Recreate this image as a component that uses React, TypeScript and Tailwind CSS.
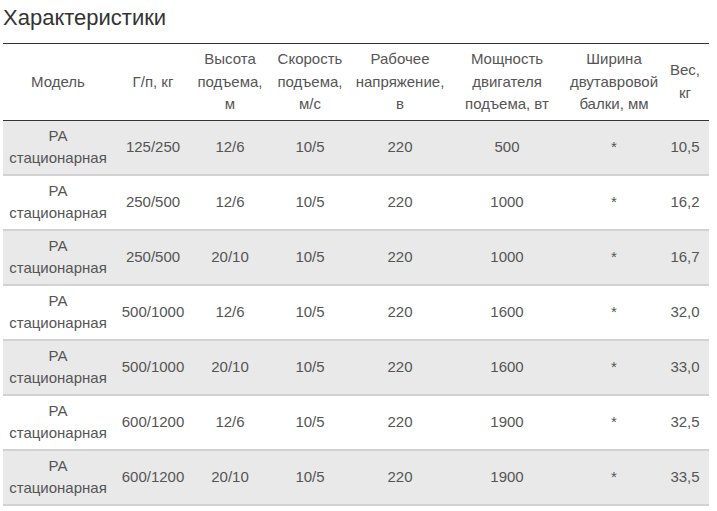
import React from "react";

const rows = [
  ["125/250", "12/6", "10/5", "220", "500", "*", "10,5"],
  ["250/500", "12/6", "10/5", "220", "1000", "*", "16,2"],
  ["250/500", "20/10", "10/5", "220", "1000", "*", "16,7"],
  ["500/1000", "12/6", "10/5", "220", "1600", "*", "32,0"],
  ["500/1000", "20/10", "10/5", "220", "1600", "*", "33,0"],
  ["600/1200", "12/6", "10/5", "220", "1900", "*", "32,5"],
  ["600/1200", "20/10", "10/5", "220", "1900", "*", "33,5"],
];

const headers: React.ReactNode[] = [
  "Модель",
  "Г/п, кг",
  <>Высота<br />подъема,<br />м</>,
  <>Скорость<br />подъема,<br />м/с</>,
  <>Рабочее<br />напряжение,<br />в</>,
  <>Мощность<br />двигателя<br />подъема, вт</>,
  <>Ширина<br />двутавровой<br />балки, мм</>,
  <>Вес,<br />кг</>,
];

export default function App() {
  return (
    <div className="bg-white w-[717px] h-[511px] overflow-hidden px-[3px]" style={{ fontFamily: '"Liberation Sans", Arial, sans-serif' }}>
      <div className="h-[43px] pt-[6px] text-[22px] leading-[24px] text-[#333]">Характеристики</div>
      <table className="table-fixed border-collapse w-[706px] text-[15px] leading-[22.5px] text-[#555]">
        <colgroup>
          <col className="w-[110px]" />
          <col className="w-[80px]" />
          <col className="w-[74px]" />
          <col className="w-[86px]" />
          <col className="w-[94px]" />
          <col className="w-[120px]" />
          <col className="w-[94px]" />
          <col className="w-[48px]" />
        </colgroup>
        <thead>
          <tr className="border-t border-b border-[#333]">
            {headers.map((h, i) => (
              <th key={i} className="font-normal text-center align-middle pt-[4px] pb-[4px] px-0 whitespace-nowrap">{h}</th>
            ))}
          </tr>
        </thead>
        <tbody>
          {rows.map((r, i) => (
            <tr key={i} className={`border-b-2 border-[#d2d2d2] ${i % 2 === 0 ? "bg-[#e9e9e9]" : "bg-white"}`}>
              <td className="text-center align-middle py-[4px] px-0">РА<br />стационарная</td>
              {r.map((c, j) => (
                <td key={j} className="text-center align-middle py-[4px] px-0">{c}</td>
              ))}
            </tr>
          ))}
        </tbody>
      </table>
    </div>
  );
}
